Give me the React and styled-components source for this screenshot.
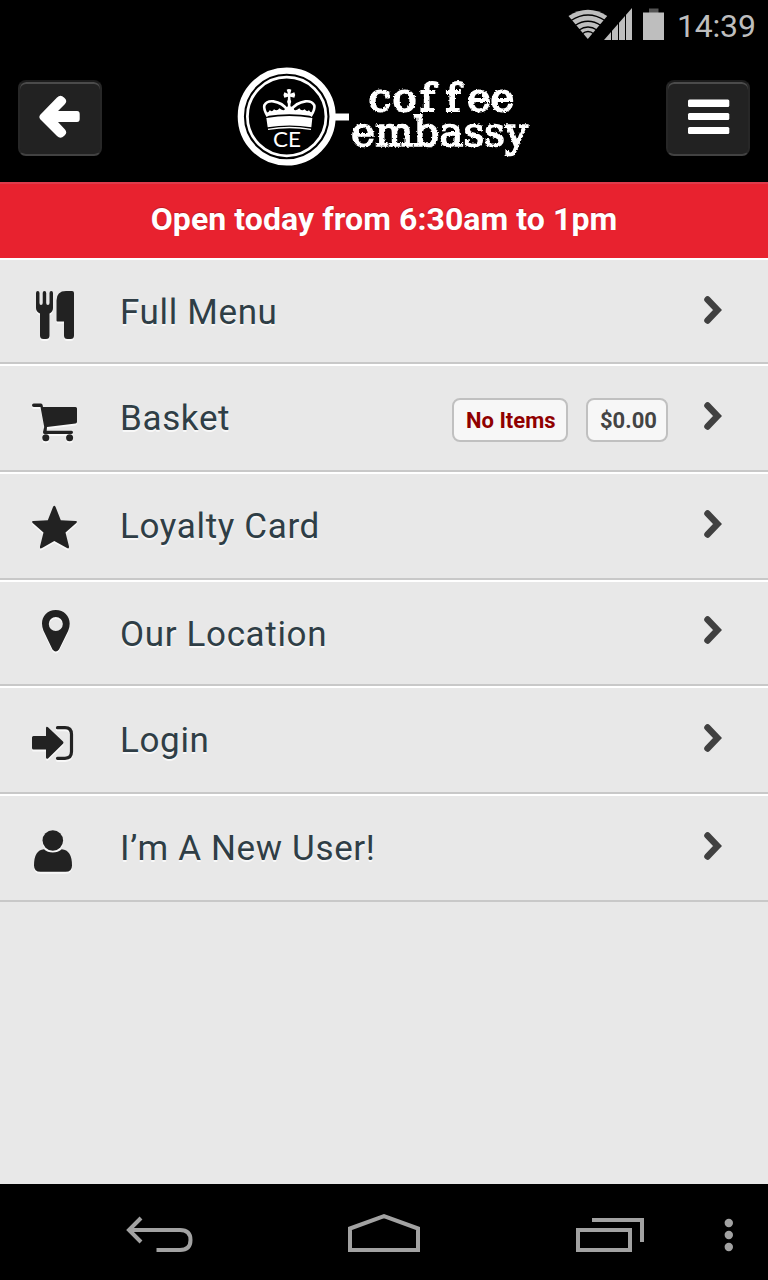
import React from 'react'
import styled, { createGlobalStyle } from 'styled-components'

const GlobalStyle = createGlobalStyle`
*{
    box-sizing:border-box;
}
body{
    margin:0;
    background:#e8e8e8;
    font-family:Roboto, sans-serif;
}
svg{
    display:block;
    flex:none;
}
`;

const Container = styled.div`
width:768px;
height:1280px;
display:flex;
flex-direction:column;
background:#e8e8e8;
overflow:hidden;
`;

const StatusBar = styled.div`
height:50px;
flex:none;
padding:0 12px 0 0;
display:flex;
justify-content:flex-end;
background:black;
color:#bebebe;
`;

const Clock = styled.span`
margin-left:12px;
font-size:32px;
line-height:53px;
letter-spacing:-0.2px;
width:79px;
white-space:nowrap;
`;

const Header = styled.header`
height:132px;
flex:none;
padding:0 18px;
display:flex;
align-items:center;
justify-content:space-between;
background:black;
`;

const HeaderButton = styled.button`
width:84px;
height:76px;
margin:4px 0 0;
padding:0;
border:2px solid #272727;
border-top-color:#1c1c1c;
border-bottom-color:#424242;
border-radius:8px;
background:#222;
box-shadow:inset 0 2px 0 #4b4b4b;
`;

const LogoText = styled.text`
font-family:"DejaVu Serif", serif;
font-size:${props => props.$size}px;
font-variant-ligatures:none;
fill:white;
stroke:white;
stroke-width:${props => props.$weight};
`;

const LogoInitials = styled.text`
font-family:Lato, sans-serif;
font-size:22px;
fill:white;
`;

const Notice = styled.div`
height:76px;
flex:none;
border-top:2px solid #de3b4b;
background:#e8222f;
color:white;
font-size:32px;
font-weight:700;
line-height:71px;
letter-spacing:0.07px;
text-align:center;
text-shadow:0 -1px 1px rgba(0,0,0,0.2);
`;

const Menu = styled.nav`
flex:1;
`;

const Item = styled.a`
height:${props => props.$height}px;
display:flex;
border-top:2px solid white;
border-bottom:2px solid #c8c8c8;
color:#2f3e46;
`;

const ItemIcon = styled.svg`
width:120px;
height:102px;
fill:#222;
filter:drop-shadow(0 2px 0 #f8f8f8);
`;

const Label = styled.span`
flex:1;
font-size:35px;
line-height:106px;
height:102px;
letter-spacing:0.65px;
white-space:nowrap;
text-shadow:0 2px 0 #f8f8f8;
`;

const Badge = styled.span`
width:${props => props.$width}px;
height:44px;
margin:32px 18px 0 0;
border:2px solid #c0c0c0;
border-radius:8px;
background:#f7f7f7;
color:${props => props.$color};
font-size:22px;
font-weight:700;
line-height:41px;
padding-left:12px;
white-space:nowrap;
`;

const Chevron = styled.svg`
width:20px;
height:30px;
margin:${props => props.$top}px 45px 0 17px;
fill:none;
stroke:#404040;
stroke-width:6.5;
stroke-linecap:round;
`;

const NavBar = styled.footer`
height:96px;
flex:none;
padding:28px 0 0 126px;
display:flex;
background:black;
`;

const NavIcon = styled.svg`
height:44px;
width:${props => props.$width}px;
margin-right:${props => props.$gap}px;
fill:none;
stroke:#a2a2a2;
stroke-width:4;
`;

const Wifi = () => (
    <svg width="40" height="50" viewBox="568 0 40 50">
        <path d="M587.8 39L568.5 16Q588 3.500 607.200 16Z" fill="#bebebe" />
        <g fill="none" stroke="black" strokeWidth="1.300">
            <path d="M571 20.500Q588 9.500 605 20.500" />
            <path d="M575 25.500Q588 17 601 25.500" />
            <path d="M579 30Q588 24 597 30" />
            <path d="M582 34Q588 29 594 34" />
        </g>
    </svg>
)

const Signal = () => (
    <svg width="35" height="50" viewBox="608 0 35 50" overflow="visible">
        <path d="M604 40L632 8V40Z" fill="#bebebe" />
        <path d="M611.5 8V41M618.5 8V41M625.500 8V41" stroke="black" strokeWidth="1" />
    </svg>
)

const Battery = () => (
    <svg width="22" height="50" viewBox="643 0 22 50">
        <path d="M649 8.500H658.500V13H649Z" fill="#555" />
        <path d="M643 12.500H664V40H643Z" fill="#bebebe" />
    </svg>
)

const Logo = () => (
    <svg width="300" height="110" viewBox="234 61 300 110">
        <defs>
            <filter id="worn" x="-5%" y="-10%" width="110%" height="120%">
                <feTurbulence type="fractalNoise" baseFrequency="0.45" numOctaves="2" seed="4" />
                <feDisplacementMap in="SourceGraphic" scale="3" xChannelSelector="R" yChannelSelector="G" />
            </filter>
        </defs>
        <g fill="none" stroke="white">
            <circle cx="286.700" cy="116.500" r="45.900" strokeWidth="6.200" />
            <circle cx="286.700" cy="116.500" r="39.300" strokeWidth="2.800" />
        </g>
        <path d="M334 113.500H349V120.500H334Z" fill="white" />
        {/* crown */}
        <g transform="translate(230 60) scale(0.33333)">
            <path d="M174 145L173 124L174 110L163 113Q158 105 163 97L174 101L170 89Q177 85 184 89L181 101L193 97Q198 105 193 113L181 110L182 124L181 145Z" fill="white" />
            <circle cx="177.500" cy="125" r="6" fill="white" />
            <path d="M113 169Q100 147 103 136Q110 122 130 124Q158 128 173 151M242 169Q256 147 253 136Q246 122 226 124Q198 128 182 151" fill="none" stroke="white" strokeWidth="8" />
            <path d="M109 158Q117 158 119 151Q128 157 132 148Q142 155 148 145Q155 152 163 150Q170 137 178 139Q187 137 193 150Q202 152 208 145Q214 155 224 148Q230 157 237 151Q240 158 248 158L246 168Q178 158 110 168Z" fill="white" />
            <path d="M109 174Q178 162 247 174L244 202Q178 191 113 202Z" fill="white" />
            <path d="M114 208Q178 197 243 208" fill="none" stroke="white" strokeWidth="4" />
        </g>
        <LogoInitials x="273" y="146.500" textLength="28" lengthAdjust="spacingAndGlyphs">CE</LogoInitials>
        <g filter="url(#worn)">
            <LogoText x="368.5 392.5 420 445.5 467 490.5" y="110.500" $size="40" $weight="2">coffee</LogoText>
            <LogoText x="351" y="146" $size="41" $weight="1.7" textLength="177" lengthAdjust="spacingAndGlyphs">embassy</LogoText>
        </g>
    </svg>
)

const CutleryIcon = () => (
    <ItemIcon viewBox="0 0 120 102">
        <path d="M36 33Q36 31 37.700 31Q39.500 31 39.500 33V43Q39.500 45 41 45Q42.700 45 42.700 43V33Q42.700 31 44.500 31Q46.200 31 46.200 33V43Q46.200 45 47.900 45Q49.500 45 49.500 43V33Q49.500 31 51.300 31Q53 31 53 33V48Q53 51.500 49.500 53.500V75.500Q49.500 79 46 79H43.500Q40 79 40 75.500V53.500Q36 51.500 36 48Z" />
        <path d="M66 31H72Q74 31 74 33V75.500Q74 79 70.500 79H67.500Q64 79 64 75.500V61.500H57.500Q56.500 61.500 56.500 60.500V40.500Q56.500 31 66 31Z" />
    </ItemIcon>
)

const CartIcon = () => (
    <ItemIcon viewBox="0 0 120 102">
        <path d="M33.800 37.500H41Q42.300 37.500 42.600 39L43 41H75.500Q77 41 77 42.500V55.500Q77 57.300 75.500 57.500L47 61L46.700 64.700H71.500Q73 64.700 73 66.300Q73 68 71.500 68H44.500Q42.700 68 43 66L44.200 61L40.500 41H33.800Q32 41 32 39.300Q32 37.500 33.800 37.500Z" />
        <circle cx="45.800" cy="71.700" r="3.500" />
        <circle cx="69.600" cy="71.700" r="3.500" />
    </ItemIcon>
)

const StarIcon = () => (
    <ItemIcon viewBox="0 0 120 102">
        <path d="M53 33Q54.300 30.500 55.600 33L60.800 46.300L75.500 47Q78 47.300 76.300 49L65.500 58.500L69 72.500Q69.200 75.300 67 74L54.300 67L42 74Q39.600 75.300 40 72.500L43.500 58.500L32.700 49Q31 47.300 33.500 47L47.800 46.300Z" />
    </ItemIcon>
)

const PinIcon = () => (
    <ItemIcon viewBox="0 0 120 102">
        <path fillRule="evenodd" d="M55.800 28C47.500 28 42 34 42 41.500Q42 45.500 43.500 48.700L52.500 67.500Q55.800 71.500 59 67.500L68.200 48.700Q69.700 45.500 69.700 41.500C69.700 34 64 28 55.800 28ZM55.800 35A7 7 0 1 1 55.800 49A7 7 0 1 1 55.800 35Z" />
    </ItemIcon>
)

const LoginIcon = () => (
    <ItemIcon viewBox="0 0 120 102">
        <path d="M33.500 48H46V40Q46.300 38 48 39.200L63 53.500Q64 54.600 63 55.800L48 70.500Q46.300 71.500 46 69.500V61.500H33.500Q32 61.500 32 60V49.500Q32 48 33.500 48Z" />
        <path d="M57.500 39.700H65Q71.500 39.700 71.500 46.500V63.500Q71.500 70.300 65 70.300H57.500" fill="none" stroke="#222" strokeWidth="3.200" strokeLinecap="round" />
    </ItemIcon>
)

const UserIcon = () => (
    <ItemIcon viewBox="0 0 120 102">
        <circle cx="52.800" cy="44.500" r="10.300" />
        <path d="M44 53.200Q47.500 56.500 52.800 56.500Q58 56.500 61.700 53.200Q72 54 72 69.500Q72 75.800 65.500 75.800H40.500Q34 75.800 34 69.500Q34 54 44 53.200Z" />
    </ItemIcon>
)

const items = [
    { label: 'Full Menu', icon: CutleryIcon, height: 106, arrow: 34.5 },
    { label: 'Basket', icon: CartIcon, height: 108, arrow: 34.5, basket: true },
    { label: 'Loyalty Card', icon: StarIcon, height: 108, arrow: 34.5 },
    { label: 'Our Location', icon: PinIcon, height: 106, arrow: 32.5 },
    { label: 'Login', icon: LoginIcon, height: 108, arrow: 34.5 },
    { label: 'I’m A New User!', icon: UserIcon, height: 108, arrow: 34.5 },
]

const App = () => {
    return (
        <Container>
            <GlobalStyle />
            <StatusBar>
                <Wifi />
                <Signal />
                <Battery />
                <Clock>14:39</Clock>
            </StatusBar>
            <Header>
                <HeaderButton aria-label="Back">
                    <svg width="80" height="72" viewBox="20 82 80 72">
                        <path d="M40 115L57 97.500Q60.500 94 64 97.500L65 98.500Q67.500 101 65 104L58 111H77Q79.700 111 79.700 114V119Q79.700 122 77 122H58L65 129.500Q67.500 132.500 65 135L64 136Q60.500 139.500 57 136L40 119Q38.500 117 40 115Z" fill="white" />
                    </svg>
                </HeaderButton>
                <Logo />
                <HeaderButton aria-label="Menu">
                    <svg width="80" height="72" viewBox="668 82 80 72" fill="white">
                        <rect x="688" y="99.500" width="41.300" height="7.500" rx="1.500" />
                        <rect x="688" y="113" width="41.300" height="7" rx="1.500" />
                        <rect x="688" y="127" width="41.300" height="7" rx="1.500" />
                    </svg>
                </HeaderButton>
            </Header>
            <Notice>Open today from 6:30am to 1pm</Notice>
            <Menu>
                {items.map(({ label, icon: Icon, height, arrow, basket }) => (
                    <Item key={label} $height={height}>
                        <Icon />
                        <Label>{label}</Label>
                        {basket && <Badge $width={116} $color="#900000">No Items</Badge>}
                        {basket && <Badge $width={82} $color="#444">$0.00</Badge>}
                        <Chevron viewBox="0 0 20 30" $top={arrow}>
                            <path d="M4.500 4.500L14.500 15L4.500 25.500" />
                        </Chevron>
                    </Item>
                ))}
            </Menu>
            <NavBar>
                <NavIcon $width={68} $gap={154} viewBox="126 1212 68 44">
                    <path d="M129 1230H180Q190.500 1230 190.500 1240Q190.500 1250 180 1250H156.500" />
                    <path d="M141 1218L129 1230L141 1242" />
                </NavIcon>
                <NavIcon $width={72} $gap={156} viewBox="348 1212 72 44">
                    <path d="M350 1250V1228.500L384 1216.200L418 1228.500V1250Z" />
                </NavIcon>
                <NavIcon $width={68} $gap={80} viewBox="576 1212 68 44">
                    <path d="M578 1230H630V1250H578ZM592 1220H642V1242" />
                </NavIcon>
                <svg width="10" height="44" viewBox="724 1212 10 44" fill="#a2a2a2">
                    <circle cx="728.800" cy="1223" r="4.200" />
                    <circle cx="728.800" cy="1235" r="4.200" />
                    <circle cx="728.800" cy="1247" r="4.200" />
                </svg>
            </NavBar>
        </Container>
    )
}

export default App
